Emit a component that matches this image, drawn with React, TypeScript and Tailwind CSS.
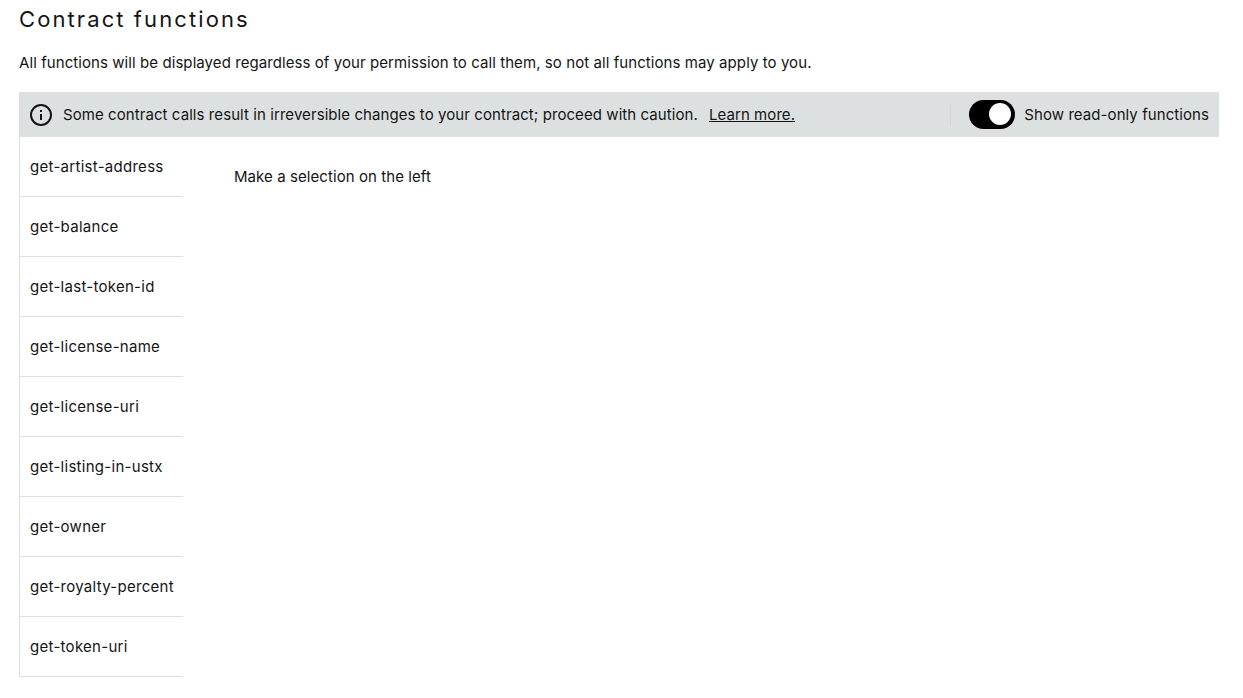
const fns = [
  'get-artist-address',
  'get-balance',
  'get-last-token-id',
  'get-license-name',
  'get-license-uri',
  'get-listing-in-ustx',
  'get-owner',
  'get-royalty-percent',
  'get-token-uri',
]

export default function App() {
  return (
    <div className="h-[698px] overflow-hidden bg-white pl-[19px] pr-6 text-[15px] tracking-[0.075px] text-[#141415] font-['Inter',sans-serif]">
      <h1 className="pt-[5px] text-[22px] leading-[28px] tracking-[0.095em]">Contract functions</h1>
      <p className="mt-[16px] leading-[28px]">
        All functions will be displayed regardless of your permission to call them, so not all functions may apply to you.
      </p>
      <div className="mt-[15px] flex h-[45px] items-center bg-[#dce0e0] pl-[11px] pr-[10px]">
        <svg width="22" height="22" viewBox="0 0 22 22" fill="none" stroke="currentColor" strokeWidth="2">
          <circle cx="11" cy="11" r="10" />
          <path d="M11 10v6M11 6v2" />
        </svg>
        <span className="ml-[11px] pt-[2px]">Some contract calls result in irreversible changes to your contract; proceed with caution.</span>
        <a className="ml-[11px] pt-[2px] underline">Learn more.</a>
        <div className="ml-auto flex h-[22px] items-center border-l border-[#d3d7d7] pl-[18px]">
          <div className="mb-[1px] flex h-[29px] w-[46px] items-center justify-end rounded-full bg-black pr-[4px]">
            <div className="h-[22px] w-[22px] rounded-full bg-white" />
          </div>
          <span className="ml-[9px] pt-[2px]">Show read-only functions</span>
        </div>
      </div>
      <div className="flex">
        <ul className="w-[164px] border-l border-[#dce0e0] tracking-[0.28px]">
          {fns.map((f) => (
            <li key={f} className="flex h-[60px] items-center border-b border-[#dce0e0] pl-[10px] pt-[2px]">{f}</li>
          ))}
        </ul>
        <div className="pl-[51px] pt-[26px] leading-[28px]">Make a selection on the left</div>
      </div>
    </div>
  )
}
